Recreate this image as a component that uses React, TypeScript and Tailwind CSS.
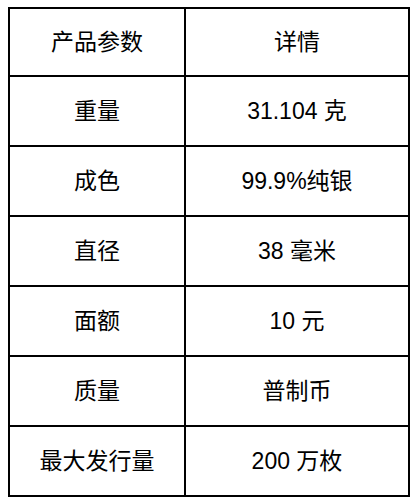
const rows: [string, string][] = [
  ["产品参数", "详情"],
  ["重量", "31.104 克"],
  ["成色", "99.9%纯银"],
  ["直径", "38 毫米"],
  ["面额", "10 元"],
  ["质量", "普制币"],
  ["最大发行量", "200 万枚"],
];

export default function App() {
  return (
    <div className="bg-white w-[420px] h-[504px] pt-[7px] pl-[8px]">
      <div
        className="w-[402px] border-2 border-black flex flex-col text-black text-[23px]"
        style={{ fontFamily: '"Liberation Sans", "Noto Sans CJK SC", sans-serif' }}
      >
        {rows.map(([k, v], i) => (
          <div
            key={k}
            className={`grid grid-cols-[174px_2px_222px] ${i > 0 ? "border-t-2 border-black h-[70px]" : "h-[66px]"}`}
          >
            <div className="flex items-center justify-center">{k}</div>
            <div className="bg-black" />
            <div className="flex items-center justify-center">{v}</div>
          </div>
        ))}
      </div>
    </div>
  );
}
